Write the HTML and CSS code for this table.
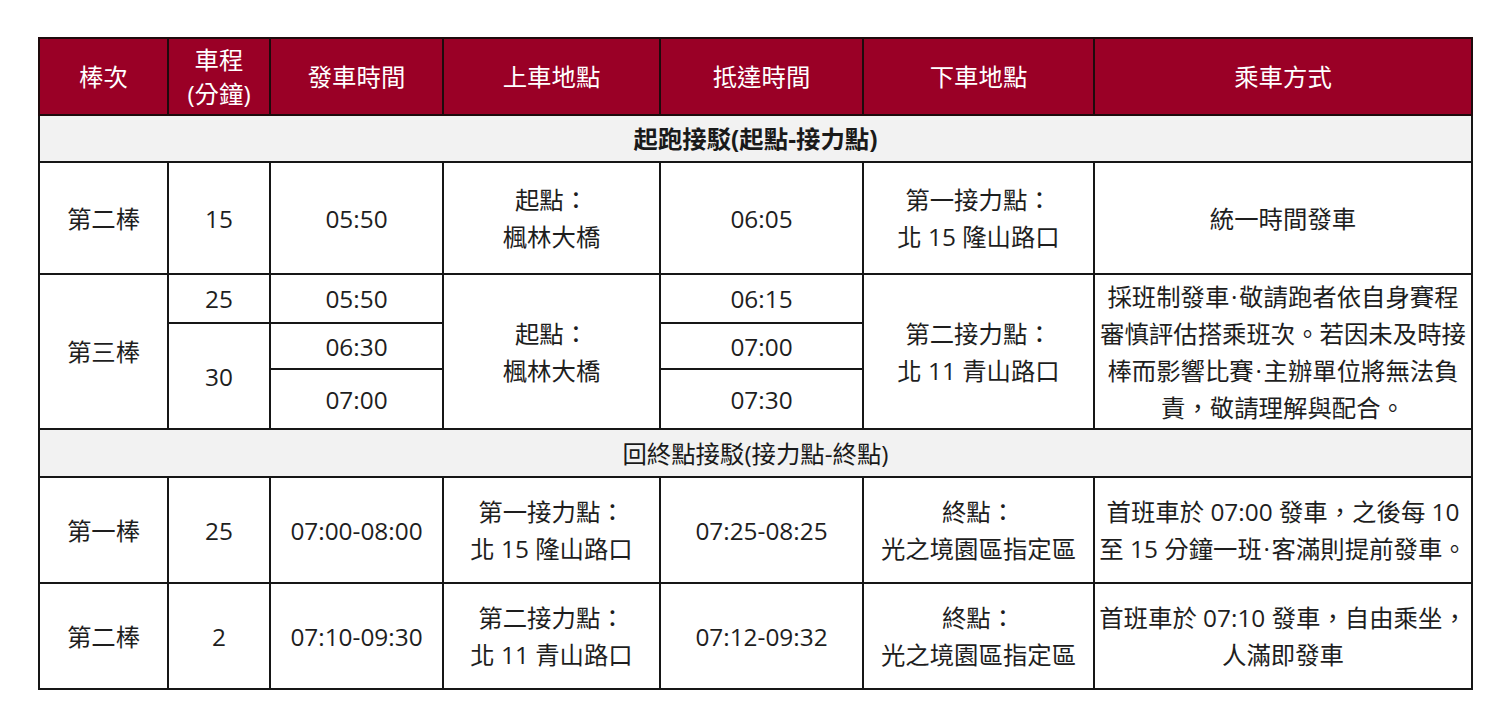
FILE: index.html
```html
<!DOCTYPE html>
<html lang="zh-Hant">
<head>
<meta charset="utf-8">
<title>接駁車時刻表</title>
<link rel="stylesheet" href="styles.css">
</head>
<body>
<table class="schedule">
  <colgroup>
    <col class="c1"><col class="c2"><col class="c3"><col class="c4"><col class="c5"><col class="c6"><col class="c7">
  </colgroup>
  <thead>
    <tr class="head-row">
      <th>棒次</th>
      <th class="two-line">車程<br>(分鐘)</th>
      <th>發車時間</th>
      <th>上車地點</th>
      <th>抵達時間</th>
      <th>下車地點</th>
      <th>乘車方式</th>
    </tr>
  </thead>
  <tbody>
    <tr class="section-row s1"><td colspan="7" class="section-title bold">起跑接駁(起點-接力點)</td></tr>
    <tr class="row-a">
      <td>第二棒</td><td>15</td><td>05:50</td>
      <td class="ml">起點：<br>楓林大橋</td>
      <td>06:05</td>
      <td class="ml">第一接力點：<br>北 15 隆山路口</td>
      <td>統一時間發車</td>
    </tr>
    <tr class="row-b1">
      <td rowspan="3">第三棒</td><td>25</td><td>05:50</td>
      <td rowspan="3" class="ml">起點：<br>楓林大橋</td>
      <td>06:15</td>
      <td rowspan="3" class="ml">第二接力點：<br>北 11 青山路口</td>
      <td rowspan="3" class="ml">採班制發車<span class="dot">·</span>敬請跑者依自身賽程<br>審慎評估搭乘班次。若因未及時接<br>棒而影響比賽<span class="dot">·</span>主辦單位將無法負<br>責，敬請理解與配合。</td>
    </tr>
    <tr class="row-b2"><td rowspan="2">30</td><td>06:30</td><td>07:00</td></tr>
    <tr class="row-b3"><td>07:00</td><td>07:30</td></tr>
    <tr class="section-row s2"><td colspan="7" class="section-title">回終點接駁(接力點-終點)</td></tr>
    <tr class="row-c">
      <td>第一棒</td><td>25</td><td>07:00-08:00</td>
      <td class="ml">第一接力點：<br>北 15 隆山路口</td>
      <td>07:25-08:25</td>
      <td class="ml">終點：<br>光之境園區指定區</td>
      <td class="ml">首班車於 07:00 發車，之後每 10<br>至 15 分鐘一班<span class="dot">·</span>客滿則提前發車。</td>
    </tr>
    <tr class="row-c">
      <td>第二棒</td><td>2</td><td>07:10-09:30</td>
      <td class="ml">第二接力點：<br>北 11 青山路口</td>
      <td>07:12-09:32</td>
      <td class="ml">終點：<br>光之境園區指定區</td>
      <td class="ml">首班車於 07:10 發車，自由乘坐，<br>人滿即發車</td>
    </tr>
  </tbody>
</table>
</body>
</html>
```
FILE: styles.css
```css
html, body {
  margin: 0;
  padding: 0;
  background: #ffffff;
}

body {
  padding: 37px 0 0 38px;
  font-family: "Open Sans", "Noto Sans CJK TC", sans-serif;
  color: #1e1e1e;
}

.schedule {
  border-collapse: collapse;
  table-layout: fixed;
  width: 1435px;
  font-size: 24.4px;
}

.c1 { width: 129px; }
.c2 { width: 102px; }
.c3 { width: 173px; }
.c4 { width: 217px; }
.c5 { width: 203px; }
.c6 { width: 231px; }
.c7 { width: 378px; }

.schedule th,
.schedule td {
  border: 2px solid #161616;
  text-align: center;
  vertical-align: middle;
  padding: 0 1px;
  white-space: nowrap;
  line-height: 37px;
}

.head-row th {
  background: #9a0026;
  color: #ffffff;
  font-weight: 400;
  height: 75px;
  border-color: #1e0a0c;
}

.head-row th.two-line {
  line-height: 34px;
}

.section-row td {
  background: #f2f2f2;
  color: #1a1a1a;
}

.s1 td { height: 45px; }
.s2 td { height: 46px; }

.bold {
  font-weight: 700;
}

.row-a td { height: 110px; }
.row-b1 td { height: 47px; }
.row-b2 td { height: 44px; }
.row-b3 td { height: 58px; }
.row-c td { height: 104px; }

.ml {
  line-height: 37.5px;
}

.dot {
  display: inline-block;
  width: 0.4em;
  text-align: center;
}
```
